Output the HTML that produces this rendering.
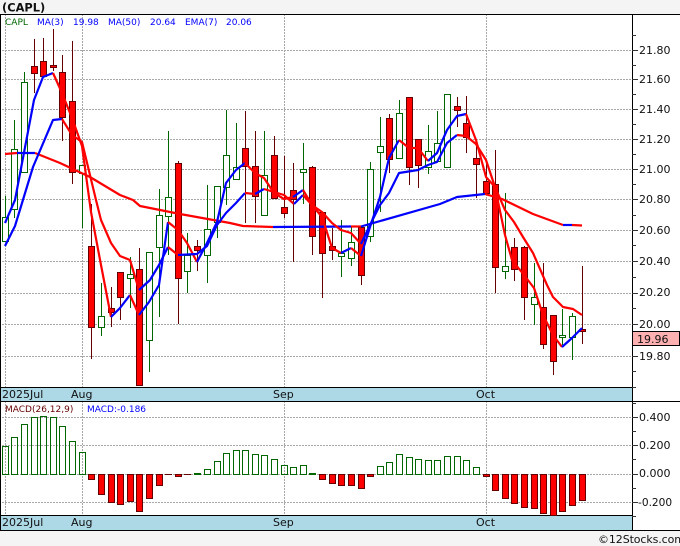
<!DOCTYPE html>
<html><head><meta charset="utf-8"><style>
html,body{margin:0;padding:0;background:#f4f4f4;width:680px;height:546px;overflow:hidden}
svg{display:block}
text{font-family:"DejaVu Sans","Liberation Sans",sans-serif;font-size:11px;fill:#111}
.c{shape-rendering:crispEdges}
.l{fill:none;stroke-width:2.2;stroke-linejoin:round}
.r{stroke:#f00}.b{stroke:#00f}
</style></head><body>
<svg width="680" height="546" viewBox="0 0 680 546" xmlns="http://www.w3.org/2000/svg">
<rect x="0" y="14" width="680" height="516" fill="#fff"/>
<text x="2" y="11.5" style="font-weight:bold;font-size:11.4px">(CAPL)</text>
<g class="c">
<path d="M2 50.5H632M2 79.5H632M2 109.5H632M2 139.5H632M2 169.5H632M2 199.5H632M2 230.5H632M2 261.5H632M2 293.5H632M2 324.5H632M2 356.5H632M2 417.5H632M2 445.5H632M2 474.5H632M2 502.5H632M5.5 14V387M82.5 14V387M284.5 14V387M486.5 14V387M5.5 401V515M82.5 401V515M284.5 401V515M486.5 401V515" stroke="#a8a8a8" stroke-dasharray="2 1" fill="none"/>
<rect x="1" y="387" width="631" height="14" fill="#add8e6"/>
<rect x="1" y="515" width="631" height="15" fill="#add8e6"/>
<path d="M0 14.5H680M0 387.5H632M0 401.5H680M0 515.5H632M0 530.5H680M.5 14V530M632.5 14V530" stroke="#000" fill="none"/>
<path d="M632 35.5h4M632 50.5h6M632 65.5h4M632 79.5h6M632 94.5h4M632 109.5h6M632 124.5h4M632 139.5h6M632 154.5h4M632 169.5h6M632 184.5h4M632 199.5h6M632 215.5h4M632 230.5h6M632 245.5h4M632 261.5h6M632 277.5h4M632 293.5h6M632 308.5h4M632 324.5h6M632 340.5h4M632 356.5h6M632 371.5h4M632 403.5h4M632 417.5h6M632 431.5h4M632 445.5h6M632 459.5h4M632 474.5h6M632 488.5h4M632 502.5h6M632 516.5h4M632 387.5h4" stroke="#333" fill="none"/>
<!-- green wicks -->
<path stroke="#060" fill="none" d="M5.5 196V241M14.5 120V218M24.5 72V172M82.5 165V228M101.5 283V336M130.5 257V308M149.5 252V372M159.5 189V317M168.5 131V255M187.5 233V293M207.5 185V283M217.5 186V238M226.5 110V205M236.5 123V179M264.5 131V215M303.5 143V204M341.5 220V277M351.5 227V266M370.5 162V242M380.5 117V212M399.5 100V158M428.5 125V174M437.5 111V161M447.5 94V167M505.5 193V279M534.5 263V325M562.5 309V345M572.5 313V360"/>
<!-- red wicks -->
<path stroke="#600" fill="none" d="M34.5 39V93M43.5 38V76M53.5 29V71M62.5 55V141M72.5 41V184M91.5 204V359M111.5 287V327M120.5 272V320M139.5 248V386M178.5 161V324M197.5 240V271M245.5 111V223M255.5 131V223M274.5 136V198M284.5 156V218M293.5 163V262M312.5 166V255M322.5 212V298M332.5 228V260M361.5 226V285M389.5 114V173M409.5 97V185M418.5 139V188M457.5 97V127M466.5 96V153M476.5 143V198M486.5 160V193M495.5 150V293M514.5 238V281M524.5 246V320M543.5 263V349M553.5 315V375M582.5 266V344"/>
<!-- green bodies -->
<g fill="#fff" stroke="#060">
<rect x="2.5" y="217.5" width="6" height="24"/><rect x="11.5" y="149.5" width="6" height="60"/><rect x="21.5" y="82.5" width="6" height="90"/><rect x="79.5" y="165.5" width="6" height="8"/>
<rect x="98.5" y="316.5" width="6" height="11"/><rect x="127.5" y="274.5" width="6" height="4"/><rect x="146.5" y="252.5" width="6" height="88"/><rect x="156.5" y="215.5" width="6" height="32"/>
<rect x="165.5" y="197.5" width="6" height="19"/><rect x="184.5" y="255.5" width="6" height="16"/><rect x="204.5" y="229.5" width="6" height="26"/><rect x="214.5" y="186.5" width="6" height="36"/>
<rect x="223.5" y="155.5" width="6" height="32"/><rect x="233.5" y="167.5" width="6" height="12"/><rect x="261.5" y="175.5" width="6" height="40"/><rect x="300.5" y="169.5" width="6" height="3"/>
<rect x="338.5" y="253.5" width="6" height="3"/><rect x="348.5" y="242.5" width="6" height="16"/><rect x="367.5" y="169.5" width="6" height="67"/><rect x="377.5" y="146.5" width="6" height="6"/>
<rect x="396.5" y="113.5" width="6" height="45"/><rect x="425.5" y="151.5" width="6" height="16"/><rect x="434.5" y="143.5" width="6" height="18"/><rect x="444.5" y="94.5" width="6" height="73"/>
<rect x="502.5" y="266.5" width="6" height="5"/><rect x="531.5" y="297.5" width="6" height="7"/><rect x="559.5" y="335.5" width="6" height="2"/><rect x="569.5" y="316.5" width="6" height="21"/>
</g>
<!-- red bodies -->
<g fill="#f00" stroke="#600">
<rect x="31.5" y="66.5" width="6" height="7"/><rect x="40.5" y="61.5" width="6" height="15"/><rect x="50.5" y="65.5" width="6" height="2"/><rect x="59.5" y="72.5" width="6" height="45"/>
<rect x="69.5" y="101.5" width="6" height="71"/><rect x="88.5" y="246.5" width="6" height="81"/><rect x="108.5" y="308.5" width="6" height="4"/><rect x="117.5" y="272.5" width="6" height="25"/>
<rect x="136.5" y="269.5" width="6" height="116"/><rect x="175.5" y="163.5" width="6" height="115"/><rect x="194.5" y="246.5" width="6" height="4"/><rect x="242.5" y="148.5" width="6" height="18"/>
<rect x="252.5" y="166.5" width="6" height="30"/><rect x="271.5" y="155.5" width="6" height="43"/><rect x="281.5" y="207.5" width="6" height="6"/><rect x="290.5" y="190.5" width="6" height="9"/>
<rect x="309.5" y="167.5" width="6" height="69"/><rect x="319.5" y="212.5" width="6" height="41"/><rect x="329.5" y="246.5" width="6" height="4"/><rect x="358.5" y="227.5" width="6" height="48"/>
<rect x="386.5" y="118.5" width="6" height="41"/><rect x="406.5" y="97.5" width="6" height="70"/><rect x="415.5" y="139.5" width="6" height="26"/><rect x="454.5" y="106.5" width="6" height="4"/>
<rect x="463.5" y="123.5" width="6" height="14"/><rect x="473.5" y="158.5" width="6" height="6"/><rect x="483.5" y="181.5" width="6" height="12"/><rect x="492.5" y="184.5" width="6" height="83"/>
<rect x="511.5" y="247.5" width="6" height="22"/><rect x="521.5" y="247.5" width="6" height="50"/><rect x="540.5" y="307.5" width="6" height="37"/><rect x="550.5" y="315.5" width="6" height="46"/>
<rect x="579.5" y="329.5" width="6" height="2"/>
</g>
<!-- MACD green -->
<path fill="none" stroke="#060" d="M2.5 474.5V446.5H8.5V474.5M11.5 474.5V437.5H17.5V474.5M21.5 474.5V424.5H27.5V474.5M31.5 474.5V417.5H37.5V474.5M40.5 474.5V416.5H46.5V474.5M50.5 474.5V417.5H56.5V474.5M59.5 474.5V426.5H65.5V474.5M69.5 474.5V441.5H75.5V474.5M79.5 474.5V452.5H85.5V474.5M204.5 474.5V469.5H210.5V474.5M214.5 474.5V461.5H220.5V474.5M223.5 474.5V453.5H229.5V474.5M233.5 474.5V450.5H239.5V474.5M242.5 474.5V450.5H248.5V474.5M252.5 474.5V454.5H258.5V474.5M261.5 474.5V455.5H267.5V474.5M271.5 474.5V459.5H277.5V474.5M281.5 474.5V465.5H287.5V474.5M290.5 474.5V467.5H296.5V474.5M300.5 474.5V465.5H306.5V474.5M377.5 474.5V466.5H383.5V474.5M386.5 474.5V462.5H392.5V474.5M396.5 474.5V454.5H402.5V474.5M406.5 474.5V457.5H412.5V474.5M415.5 474.5V459.5H421.5V474.5M425.5 474.5V460.5H431.5V474.5M434.5 474.5V460.5H440.5V474.5M444.5 474.5V456.5H450.5V474.5M454.5 474.5V456.5H460.5V474.5M463.5 474.5V460.5H469.5V474.5M473.5 474.5V467.5H479.5V474.5M194 473.5H201M309 473.5H316"/>
<path fill="none" stroke="#060" d="M2 474.5H9M11 474.5H18M21 474.5H28M31 474.5H38M40 474.5H47M50 474.5H57M59 474.5H66M69 474.5H76M79 474.5H86M204 474.5H211M214 474.5H221M223 474.5H230M233 474.5H240M242 474.5H249M252 474.5H259M261 474.5H268M271 474.5H278M281 474.5H288M290 474.5H297M300 474.5H307M377 474.5H384M386 474.5H393M396 474.5H403M406 474.5H413M415 474.5H422M425 474.5H432M434 474.5H441M444 474.5H451M454 474.5H461M463 474.5H470M473 474.5H480M194 474.5H201M309 474.5H316"/>
<!-- MACD red -->
<g fill="#f00" stroke="#600">
<rect x="88.5" y="474.5" width="6" height="5"/><rect x="98.5" y="474.5" width="6" height="20"/><rect x="108.5" y="474.5" width="6" height="28"/><rect x="117.5" y="474.5" width="6" height="30"/>
<rect x="127.5" y="474.5" width="6" height="27"/><rect x="136.5" y="474.5" width="6" height="37"/><rect x="146.5" y="474.5" width="6" height="24"/><rect x="156.5" y="474.5" width="6" height="11"/>
<rect x="175.5" y="474.5" width="6" height="2"/><rect x="319.5" y="474.5" width="6" height="5"/><rect x="329.5" y="474.5" width="6" height="9"/><rect x="338.5" y="474.5" width="6" height="11"/>
<rect x="348.5" y="474.5" width="6" height="11"/><rect x="358.5" y="474.5" width="6" height="14"/><rect x="367.5" y="474.5" width="6" height="2"/><rect x="483.5" y="474.5" width="6" height="2"/>
<rect x="492.5" y="474.5" width="6" height="16"/><rect x="502.5" y="474.5" width="6" height="24"/><rect x="511.5" y="474.5" width="6" height="29"/><rect x="521.5" y="474.5" width="6" height="33"/>
<rect x="531.5" y="474.5" width="6" height="34"/><rect x="540.5" y="474.5" width="6" height="39"/><rect x="550.5" y="474.5" width="6" height="41"/><rect x="559.5" y="474.5" width="6" height="37"/>
<rect x="569.5" y="474.5" width="6" height="31"/><rect x="579.5" y="474.5" width="6" height="26"/>
</g>
<path stroke="#600" fill="none" d="M165 474.5H172M184 474.5H191"/>
<rect x="632.5" y="331.5" width="47" height="14" fill="#ffb0b0" stroke="#000"/>
</g>
<!-- MA50 -->
<polyline class="l r" points="5,154 17,153"/>
<polyline class="l b" points="17,153 35,153"/>
<polyline class="l r" points="35,153 60,163 90,177 120,195 133,200 140,206 180,214 230,223 243,226 273,227"/>
<polyline class="l b" points="273,227 351,226.5"/>
<polyline class="l r" points="351,226.5 361,226.5"/>
<polyline class="l b" points="361,226.5 440,204 457,197 485,194"/>
<polyline class="l r" points="485,194 502,199 533,214 563,225"/>
<polyline class="l b" points="563,225 572,225"/>
<polyline class="l r" points="572,225 582,225.5"/>
<!-- fast -->
<polyline class="l b" points="5,223 15,200 34,100 43,77 53,73"/>
<polyline class="l r" points="53,73 62,93 72,118 82,146 91,212 101,265 111,317"/>
<polyline class="l b" points="111,317 120,308 130,295"/>
<polyline class="l r" points="130,295 139,315"/>
<polyline class="l b" points="139,315 149,302 159,285 168,222"/>
<polyline class="l r" points="168,222 178,230 187,243 197,262"/>
<polyline class="l b" points="197,262 207,243 217,222 226,183 236,170 245,163"/>
<polyline class="l r" points="245,163 255,173 264,178 274,193 284,199 293,197"/>
<polyline class="l b" points="293,197 303,190"/>
<polyline class="l r" points="303,190 312,205 322,217 332,248 341,253"/>
<polyline class="l b" points="341,253 351,248"/>
<polyline class="l r" points="351,248 361,256"/>
<polyline class="l b" points="361,256 370,227 380,197 389,158 399,140"/>
<polyline class="l r" points="399,140 409,148 418,148 428,161"/>
<polyline class="l b" points="428,161 437,153 447,130 457,116 466,114"/>
<polyline class="l r" points="466,114 476,140 486,177 495,187 505,235 512,260 524,275 534,288 543,315 553,335 562,347"/>
<polyline class="l b" points="562,347 572,338 582,328"/>
<!-- slow -->
<polyline class="l b" points="5,246 15,226 33,167 53,120 62,119"/>
<polyline class="l r" points="62,119 72,135 82,142 96,200 101,220 111,243 120,256 130,260 139,290"/>
<polyline class="l b" points="139,290 150,280 159,265 168,247"/>
<polyline class="l r" points="168,247 178,255"/>
<polyline class="l b" points="178,255 197,254 207,246 217,225 226,213 236,203 245,193"/>
<polyline class="l r" points="245,193 255,194"/>
<polyline class="l b" points="255,194 264,189"/>
<polyline class="l r" points="264,189 274,192 284,195 294,204"/>
<polyline class="l b" points="294,204 303,195"/>
<polyline class="l r" points="303,195 312,205 322,212 332,223 341,230 351,233 361,244"/>
<polyline class="l b" points="361,244 370,225 380,205 389,193 399,173 418,170 428,165 437,162 447,143 457,135"/>
<polyline class="l r" points="457,135 466,136 476,144 486,160 495,187 505,210 514,222 523,237 533,253 547,285 553,297 563,307 573,309 582,315"/>
<!-- legend -->
<g>
<text x="5" y="25" style="font-size:9px;fill:#060">CAPL</text>
<text x="37" y="25" style="font-size:9px;fill:#00f">MA(3)</text>
<text x="73" y="25" style="font-size:9px;fill:#00f">19.98</text>
<text x="108" y="25" style="font-size:9px;fill:#00f">MA(50)</text>
<text x="150" y="25" style="font-size:9px;fill:#00f">20.64</text>
<text x="185" y="25" style="font-size:9px;fill:#00f">EMA(7)</text>
<text x="226" y="25" style="font-size:9px;fill:#00f">20.06</text>
<text x="5" y="412" style="font-size:9px;fill:#600">MACD(26,12,9)</text>
<text x="87" y="412" style="font-size:9px;fill:#00f">MACD:-0.186</text>
</g>
<text x="639" y="54">21.80</text><text x="639" y="83">21.60</text><text x="639" y="113">21.40</text><text x="639" y="143">21.20</text><text x="639" y="173">21.00</text><text x="639" y="203">20.80</text><text x="639" y="234">20.60</text><text x="639" y="265">20.40</text><text x="639" y="296">20.20</text><text x="639" y="328">20.00</text><text x="639" y="360">19.80</text>
<text x="637" y="343">19.96</text>
<text x="639" y="421">0.400</text><text x="639" y="449">0.200</text><text x="639" y="477">0.000</text><text x="638" y="506" style="font-size:10.6px">-0.200</text>
<text x="2" y="398">2025Jul</text><text x="71" y="398">Aug</text><text x="273" y="398">Sep</text><text x="476" y="398">Oct</text>
<text x="2" y="526">2025Jul</text><text x="71" y="526">Aug</text><text x="273" y="526">Sep</text><text x="476" y="526">Oct</text>
<text x="598" y="543" style="letter-spacing:-.1px">©12Stocks.com</text>
</svg>
</body></html>
